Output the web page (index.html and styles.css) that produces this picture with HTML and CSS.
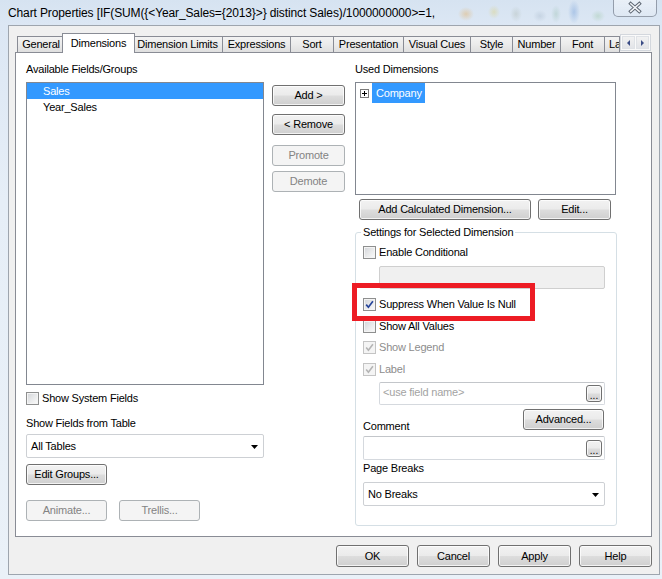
FILE: index.html
```html
<!DOCTYPE html>
<html>
<head>
<meta charset="utf-8">
<title>Chart Properties</title>
<link rel="stylesheet" href="styles.css">
</head>
<body>
<div class="window">
  <div class="titlebar">
    <span class="title">Chart Properties [IF(SUM({&lt;Year_Sales={2013}&gt;} distinct Sales)/1000000000&gt;=1,</span>
    <div class="close">
      <svg width="44" height="16" viewBox="0 0 44 16">
        <path d="M17.5 3.5 L26.5 11.5 M26.5 3.5 L17.5 11.5" stroke="#5d6672" stroke-width="3.6" stroke-linecap="square" fill="none"/>
        <path d="M17.5 3.5 L26.5 11.5 M26.5 3.5 L17.5 11.5" stroke="#f3f5f8" stroke-width="1.6" stroke-linecap="square" fill="none"/>
      </svg>
    </div>
  </div>

  <div class="dialog">
    <div class="tabrow">
      <div class="tabs">
        <div class="tab t-general">General</div>
        <div class="tab t-dims active">Dimensions</div>
        <div class="tab t-dl">Dimension Limits</div>
        <div class="tab t-expr">Expressions</div>
        <div class="tab t-sort">Sort</div>
        <div class="tab t-pres">Presentation</div>
        <div class="tab t-vc">Visual Cues</div>
        <div class="tab t-style">Style</div>
        <div class="tab t-num">Number</div>
        <div class="tab t-font">Font</div>
        <div class="tab t-la">La</div>
      </div>
      <div class="tabarrows">
        <span class="arr"><span class="tri-left"></span></span>
        <span class="arr"><span class="tri-right"></span></span>
      </div>
    </div>

    <div class="panel">
      <div class="col-left">
        <div class="lbl">Available Fields/Groups</div>
        <div class="list l-avail">
          <div class="item sel">Sales</div>
          <div class="item">Year_Sales</div>
        </div>
        <div class="cbrow sysrow"><span class="cb"></span><span class="cbl">Show System Fields</span></div>
        <div class="lbl tbl-label">Show Fields from Table</div>
        <div class="combo c-tables"><span class="ctext">All Tables</span>
          <svg class="carrow" width="7" height="4" viewBox="0 0 7 4"><polygon points="0,0 7,0 3.5,4" fill="#000"/></svg>
        </div>
        <button class="btn b-eg">Edit Groups...</button>
        <div class="btnrow-anim">
          <button class="btn disabled b-anim">Animate...</button>
          <button class="btn disabled b-trel">Trellis...</button>
        </div>
      </div>

      <div class="col-mid">
        <button class="btn b-add">Add &gt;</button>
        <button class="btn b-rem">&lt; Remove</button>
        <button class="btn disabled b-pro">Promote</button>
        <button class="btn disabled b-dem">Demote</button>
      </div>

      <div class="col-right">
        <div class="lbl">Used Dimensions</div>
        <div class="list l-used">
          <div class="tree-row">
            <svg class="plus" width="9" height="9" viewBox="0 0 9 9">
              <rect x="0.5" y="0.5" width="8" height="8" fill="#fff" stroke="#7a7a7a"/>
              <path d="M2 4.5 H7 M4.5 2 V7" stroke="#000" stroke-width="1"/>
            </svg>
            <span class="tree-sel">Company</span>
          </div>
        </div>
        <div class="btnrow-calc">
          <button class="btn b-calc">Add Calculated Dimension...</button>
          <button class="btn b-edit">Edit...</button>
        </div>

        <div class="group">
          <span class="legend">Settings for Selected Dimension</span>
          <div class="cbrow r-enable"><span class="cb"></span><span class="cbl">Enable Conditional</span></div>
          <div class="field disabled f-cond"></div>
          <div class="cbrow r-suppress"><span class="cb"><svg width="11" height="11" viewBox="0 0 11 11"><path d="M2.2 5.6 L4.4 8.2 L8.9 2.3" fill="none" stroke="#26449a" stroke-width="1.7"/></svg></span><span class="cbl">Suppress When Value Is Null</span></div>
          <div class="cbrow r-showall"><span class="cb"></span><span class="cbl">Show All Values</span></div>
          <div class="cbrow r-legend dis"><span class="cb"><svg width="11" height="11" viewBox="0 0 11 11"><path d="M2.2 5.6 L4.4 8.2 L8.9 2.3" fill="none" stroke="#b4b4b4" stroke-width="1.6"/></svg></span><span class="cbl">Show Legend</span></div>
          <div class="cbrow r-label dis"><span class="cb"><svg width="11" height="11" viewBox="0 0 11 11"><path d="M2.2 5.6 L4.4 8.2 L8.9 2.3" fill="none" stroke="#b4b4b4" stroke-width="1.6"/></svg></span><span class="cbl">Label</span></div>
          <div class="field f-label"><span class="placeholder">&lt;use field name&gt;</span><span class="dots">...</span></div>
          <div class="comment-row">
            <span class="lbl comment-lbl">Comment</span>
            <button class="btn b-adv">Advanced...</button>
          </div>
          <div class="field f-comment"><span class="dots">...</span></div>
          <div class="lbl pb-lbl">Page Breaks</div>
          <div class="combo c-pb"><span class="ctext">No Breaks</span>
            <svg class="carrow" width="7" height="4" viewBox="0 0 7 4"><polygon points="0,0 7,0 3.5,4" fill="#000"/></svg>
          </div>
          <div class="highlight"></div>
        </div>
      </div>
    </div>

    <div class="footer">
      <button class="btn fbtn">OK</button>
      <button class="btn fbtn">Cancel</button>
      <button class="btn fbtn">Apply</button>
      <button class="btn fbtn">Help</button>
    </div>
  </div>
</div>
</body>
</html>
```

FILE: styles.css
```css
* { box-sizing: border-box; }
html, body { margin: 0; padding: 0; }
body {
  width: 662px;
  height: 579px;
  overflow: hidden;
  font-family: "Liberation Sans", Arial, sans-serif;
  font-size: 11px;
  letter-spacing: -0.2px;
  color: #000;
  background: linear-gradient(180deg, #d6e3f1 0px, #dce7f4 25px, #e6eef7 200px, #eaf1f8 579px);
}
.window { width: 662px; height: 579px; display: flex; flex-direction: column; }

/* title bar */
.titlebar {
  height: 25px;
  flex: none;
  display: flex;
  align-items: flex-start;
  background:
    radial-gradient(ellipse 8px 7px at 466px 14px, rgba(230,160,60,0.35), transparent),
    radial-gradient(ellipse 6px 7px at 494px 12px, rgba(220,200,80,0.30), transparent),
    radial-gradient(ellipse 6px 8px at 516px 14px, rgba(150,160,140,0.25), transparent),
    radial-gradient(ellipse 7px 6px at 540px 16px, rgba(140,160,180,0.25), transparent),
    radial-gradient(ellipse 5px 9px at 556px 14px, rgba(120,170,140,0.25), transparent),
    radial-gradient(ellipse 6px 12px at 574px 12px, rgba(90,140,210,0.35), transparent),
    radial-gradient(ellipse 7px 6px at 598px 16px, rgba(120,180,120,0.25), transparent);
}
.title {
  font-size: 12px;
  letter-spacing: -0.12px;
  line-height: 16px;
  margin: 5px 0 0 8px;
  white-space: nowrap;
}
.close {
  margin-left: auto;
  margin-right: 5px;
  width: 44px;
  height: 17px;
  border: 1px solid rgba(80, 92, 110, 0.55);
  border-top: none;
  border-radius: 0 0 5px 5px;
  background: linear-gradient(180deg, rgba(255,255,255,0.45), rgba(225,233,243,0.6));
  display: flex;
  align-items: center;
  justify-content: center;
}
.close svg { display: block; }

/* dialog */
.dialog {
  margin-left: 8px;
  width: 652px;
  height: 550px;
  flex: none;
  border: 1px solid #9ea5ae;
  background: #f0f0f0;
  padding: 7px 7px 0 6px;
  display: flex;
  flex-direction: column;
}

/* tabs */
.tabrow {
  height: 20px;
  display: flex;
  align-items: flex-end;
  position: relative;
  z-index: 2;
  flex: none;
}
.tabs {
  width: 605px;
  height: 20px;
  overflow: hidden;
  display: flex;
  align-items: flex-end;
  padding-left: 2px;
  flex: none;
}
.tab {
  flex: none;
  height: 16px;
  margin-bottom: 1px;
  margin-left: -1px;
  border: 1px solid #898c95;
  border-bottom: none;
  background: linear-gradient(180deg, #f3f3f3 0%, #ebebeb 50%, #dfdfdf 100%);
  text-align: center;
  line-height: 15px;
  white-space: nowrap;
  overflow: hidden;
}
.tab:first-child { margin-left: 0; }
.tab.active {
  height: 20px;
  margin-bottom: 0;
  margin-left: -3px;
  margin-right: -2px;
  background: #fff;
  position: relative;
  z-index: 1;
  line-height: 16px;
  padding-top: 1px;
}
.t-general { width: 48px; }
.t-dims { width: 73px; }
.t-dl { width: 91px; }
.t-expr { width: 69px; }
.t-sort { width: 44px; }
.t-pres { width: 71px; }
.t-vc { width: 68px; }
.t-style { width: 43px; }
.t-num { width: 49px; }
.t-font { width: 45px; }
.t-la { width: 16px; text-align: left; padding-left: 4px; }

.tabarrows {
  flex: none;
  width: 31px;
  height: 17px;
  margin-bottom: 2px;
  border: 1px solid #d3d7dd;
  background: #fafafa;
  display: flex;
  padding: 1px;
  gap: 1px;
}
.arr {
  flex: 1;
  background: linear-gradient(180deg, #f2f2f2, #e2e4e8);
  border: 1px solid #dfe2e6;
  display: flex;
  align-items: center;
  justify-content: center;
}
.tri-left, .tri-right { width: 0; height: 0; border-top: 3px solid transparent; border-bottom: 3px solid transparent; }
.tri-left { border-right: 3px solid #3b4d86; }
.tri-right { border-left: 3px solid #3b4d86; }

/* panel */
.panel {
  flex: none;
  height: 485px;
  margin-top: -1px;
  border: 1px solid #898c95;
  background: #fff;
  display: flex;
  align-items: flex-start;
  padding: 9px 0 0 10px;
}
.col-left { width: 238px; display: flex; flex-direction: column; flex: none; }
.col-mid { width: 73px; margin-left: 8px; display: flex; flex-direction: column; flex: none; }
.col-right { width: 262px; margin-left: 10px; display: flex; flex-direction: column; flex: none; }

.lbl { height: 14px; line-height: 14px; white-space: nowrap; }

.list { border: 1px solid #828790; background: #fff; margin-top: 6px; }
.l-avail { height: 303px; }
.l-used { height: 113px; width: 261px; }
.item { height: 16px; line-height: 16px; padding-left: 16px; white-space: nowrap; }
.item.sel { background: #3399ff; color: #fff; }
.tree-row { display: flex; align-items: center; height: 20px; padding-left: 4px; }
.plus { display: block; flex: none; }
.tree-sel { margin-left: 3px; height: 20px; line-height: 20px; padding: 0 3px 0 4px; background: #3399ff; color: #fff; }

/* buttons */
.btn {
  appearance: none;
  -webkit-appearance: none;
  font: inherit;
  letter-spacing: inherit;
  color: #000;
  margin: 0;
  padding: 0;
  height: 21px;
  border: 1px solid #707070;
  border-radius: 3px;
  background: linear-gradient(180deg, #f2f2f2 0%, #ebebeb 48%, #dddddd 52%, #cfcfcf 100%);
  box-shadow: inset 0 0 0 1px rgba(255,255,255,0.75);
  text-align: center;
  line-height: 19px;
  white-space: nowrap;
  flex: none;
}
.btn.disabled {
  border-color: #adb2b5;
  background: #f4f4f4;
  box-shadow: none;
  color: #838383;
}
.b-add { width: 73px; margin-top: 23px; }
.b-rem { width: 73px; margin-top: 8px; }
.b-pro { width: 73px; margin-top: 10px; }
.b-dem { width: 73px; margin-top: 5px; }

.b-eg { width: 81px; margin-top: 6px; }
.btnrow-anim { display: flex; margin-top: 15px; }
.b-anim { width: 81px; }
.b-trel { width: 81px; margin-left: 12px; }

.btnrow-calc { display: flex; margin-top: 4px; }
.b-calc { width: 172px; margin-left: 4px; }
.b-edit { width: 73px; margin-left: 7px; }

/* checkboxes */
.cbrow { display: flex; align-items: center; height: 13px; }
.cb {
  flex: none;
  width: 13px;
  height: 13px;
  border: 1px solid #8e8f8f;
  background: linear-gradient(135deg, #d2d4d8 0%, #eaebec 55%, #fbfbfb 100%);
  box-shadow: inset 0 0 0 1px #f4f4f4;
  display: flex;
}
.cb svg { display: block; }
.cbl { margin-left: 3px; line-height: 13px; white-space: nowrap; }
.dis .cb { border-color: #c4c4c4; background: #f4f4f4; box-shadow: none; }
.dis .cbl { color: #8d8d8d; }
.sysrow { margin-top: 7px; }
.tbl-label { margin-top: 11px; }

/* combo & fields */
.combo {
  height: 24px;
  border: 1px solid #cdd0d4;
  border-radius: 2px;
  background: #fff;
  display: flex;
  align-items: center;
  padding: 0 5px 0 4px;
}
.ctext { flex: 1; white-space: nowrap; }
.carrow { display: block; flex: none; margin-top: 1px; }
.c-tables { margin-top: 4px; }

.field {
  height: 23px;
  border: 1px solid #d5d9de;
  border-top-color: #c3c6ca;
  border-radius: 2px;
  background: #fff;
  display: flex;
  align-items: center;
  justify-content: flex-end;
  padding-right: 2px;
}
.field.disabled { background: #f0f0f0; border-color: #cfcfcf; }
.placeholder { flex: 1; padding-left: 3px; padding-bottom: 3px; color: #a3a3a3; white-space: nowrap; }
.dots {
  flex: none;
  width: 16px;
  height: 17px;
  border: 1px solid #707070;
  border-radius: 3px;
  background: linear-gradient(180deg, #f2f2f2 0%, #ebebeb 48%, #dddddd 52%, #cfcfcf 100%);
  box-shadow: inset 0 0 0 1px rgba(255,255,255,0.75);
  text-align: center;
  line-height: 19px;
  font-size: 10px;
  letter-spacing: 0;
}

/* group box */
.group {
  position: relative;
  margin-top: 12px;
  height: 294px;
  border: 1px solid #d5dfe5;
  border-radius: 3px;
  padding: 0 0 0 7px;
  display: flex;
  flex-direction: column;
  align-items: flex-start;
}
.legend {
  margin-top: -8px;
  margin-left: -2px;
  padding: 0 2px;
  height: 14px;
  line-height: 14px;
  background: #fff;
  white-space: nowrap;
}
.r-enable { margin-top: 7px; }
.f-cond { margin-top: 7px; margin-left: 16px; width: 226px; }
.r-suppress { margin-top: 9px; }
.r-showall { margin-top: 9px; }
.r-legend { margin-top: 8px; }
.r-label { margin-top: 9px; }
.f-label { margin-top: 6px; margin-left: 16px; width: 226px; }
.comment-row {
  margin-top: 4px;
  width: 241px;
  height: 24px;
  display: flex;
  justify-content: space-between;
  align-items: flex-start;
}
.comment-lbl { margin-top: 10px; }
.b-adv { width: 81px; }
.f-comment { margin-top: 3px; width: 242px; height: 24px; }
.pb-lbl { margin-top: 1px; }
.c-pb { margin-top: 7px; width: 242px; }

.highlight {
  position: absolute;
  left: -4px;
  top: 50px;
  width: 183px;
  height: 38px;
  border: 5px solid #ed1c24;
}

/* footer */
.footer {
  display: flex;
  justify-content: flex-end;
  gap: 8px;
  margin-top: 8px;
}
.fbtn { width: 73px; height: 22px; line-height: 20px; }
```
